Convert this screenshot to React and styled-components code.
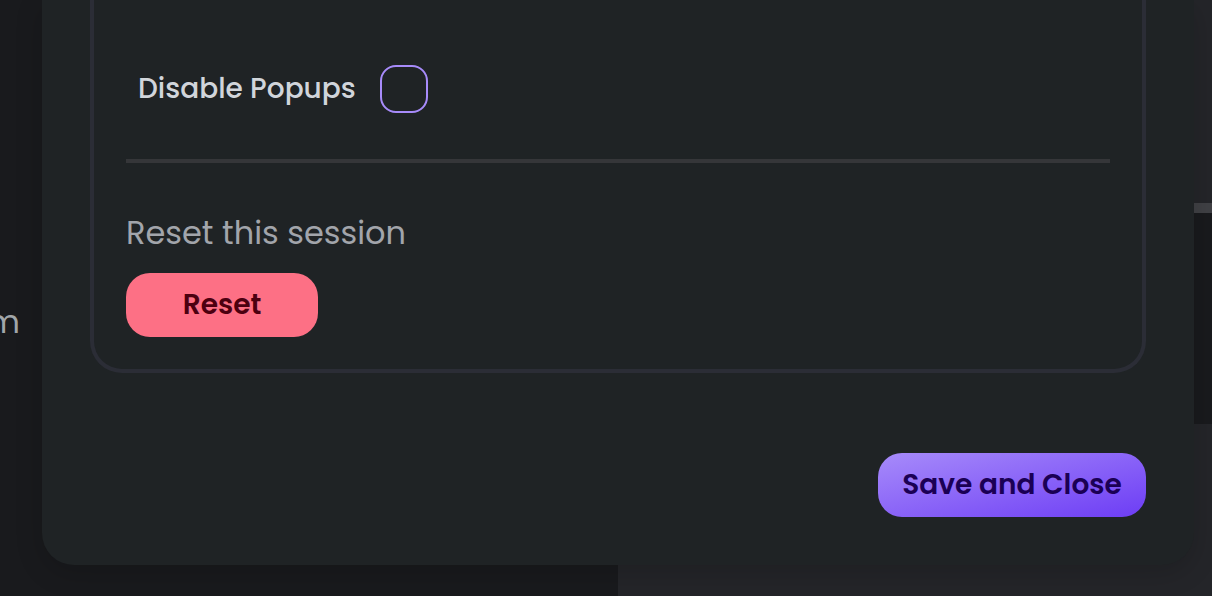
import React, { useState } from "react";
import styled, { createGlobalStyle } from "styled-components";

const GlobalStyle = createGlobalStyle`
  *, *::before, *::after { box-sizing: border-box; }
  body {
    margin: 0;
    background: #222327;
    color: #d1d5db;
    font-family: Poppins, Inter, "Open Sans", sans-serif;
  }
`;

const Page = styled.div`
  position: relative;
  min-height: 100vh;
  overflow: hidden;
  display: grid;
  grid-template-columns: 51fr 49fr;
`;

const SidePane = styled.aside`
  background: #191a1d;
  padding-top: 298px;
`;

const SideText = styled.p`
  display: flex;
  justify-content: flex-end;
  width: 20px;
  margin: 0;
  overflow: hidden;
  font-size: 32px;
  line-height: 48px;
  color: #a1a6aa;
`;

const MainPane = styled.main`
  background: #242529;
  padding-top: 203px;
`;

const Panel = styled.section`
  height: 221px;
  border-top: 10px solid #404145;
  background: #191a1d;
`;

const Overlay = styled.div`
  position: absolute;
  inset: 0;
  padding: 0 18px 31px 42px;
`;

const Dialog = styled.div`
  display: flex;
  flex-direction: column;
  gap: 80px;
  padding: 0 48px 48px;
  border-radius: 0 0 32px 32px;
  background: #1f2325;
  box-shadow: 0 8px 28px rgba(0, 0, 0, 0.16);
`;

const Card = styled.section`
  display: flex;
  flex-direction: column;
  padding: 65px 32px 32px;
  border: 4px solid #2b2d36;
  border-top: 0;
  border-radius: 0 0 32px 32px;
`;

const OptionRow = styled.label`
  display: flex;
  align-items: center;
  align-self: flex-start;
  gap: 24px;
  padding-left: 12px;
  font-size: 28px;
  font-weight: 500;
  line-height: 48px;
  color: #d1d5db;
`;

const Checkbox = styled.input`
  appearance: none;
  width: 48px;
  height: 48px;
  margin: 0;
  border: 2px solid #a78bfa;
  border-radius: 16px;
  cursor: pointer;

  &:checked {
    background: #a78bfa;
    box-shadow: inset 0 0 0 8px #1f2325;
  }
`;

const Divider = styled.hr`
  align-self: stretch;
  height: 4px;
  margin: 46px 0;
  border: 0;
  background: #353639;
`;

const Caption = styled.p`
  margin: 0 0 16px;
  font-size: 32px;
  line-height: 48px;
  color: #a2a5ab;
`;

const Button = styled.button`
  height: 64px;
  padding: 0 24px;
  border: 0;
  border-radius: 24px;
  font: inherit;
  font-size: 28px;
  font-weight: 600;
  white-space: nowrap;
  cursor: pointer;
  width: ${({ $primary }) => ($primary ? "268px" : "192px")};
  color: ${({ $primary }) => ($primary ? "#1b0055" : "#4c0010")};
  background: ${({ $primary }) =>
    $primary
      ? "linear-gradient(to bottom right, #a78bfa, #6d3df5)"
      : "#fd7085"};
`;

const Footer = styled.footer`
  display: flex;
  justify-content: flex-end;
`;

export default function App() {
  const [popupsDisabled, setPopupsDisabled] = useState(false);

  return (
    <>
      <GlobalStyle />
      <Page>
        <SidePane>
          <SideText>m</SideText>
        </SidePane>
        <MainPane>
          <Panel />
        </MainPane>
        <Overlay>
          <Dialog role="dialog" aria-label="Settings">
            <Card>
              <OptionRow>
                Disable Popups
                <Checkbox
                  type="checkbox"
                  checked={popupsDisabled}
                  onChange={(e) => setPopupsDisabled(e.target.checked)}
                />
              </OptionRow>
              <Divider />
              <Caption>Reset this session</Caption>
              <Button type="button">Reset</Button>
            </Card>
            <Footer>
              <Button type="button" $primary>
                Save and Close
              </Button>
            </Footer>
          </Dialog>
        </Overlay>
      </Page>
    </>
  );
}
